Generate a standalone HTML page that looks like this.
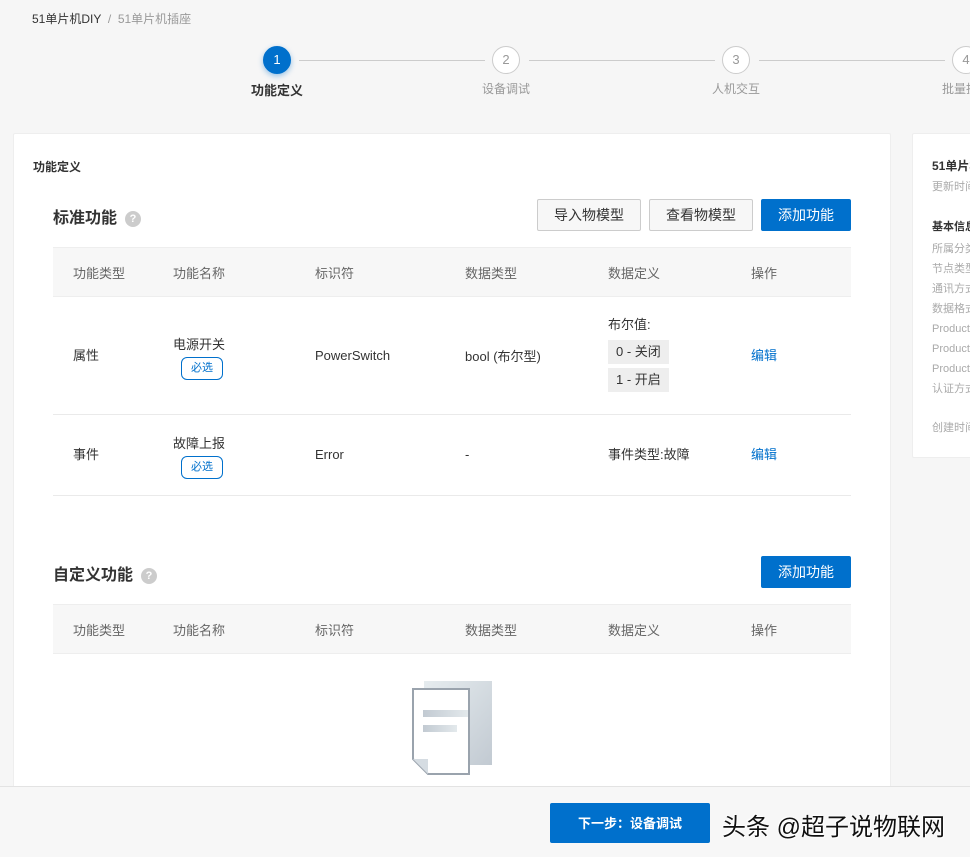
<!DOCTYPE html>
<html><head><meta charset="utf-8"><style>
*{margin:0;padding:0;box-sizing:border-box}
body{width:970px;height:857px;overflow:hidden;background:#f6f6f6;font-family:"Liberation Sans","Noto Sans CJK SC",sans-serif;color:#333;font-size:13px;position:relative}
.abs{position:absolute}
.crumb{left:32px;top:10px;font-size:12px;color:#333}
.crumb span{color:#999}
.circ{width:28px;height:28px;border-radius:50%;border:1px solid #ccc;background:#fff;color:#999;font-size:13px;text-align:center;line-height:26px;top:46px}
.circ.on{background:#0070cc;border-color:#0070cc;color:#fff;box-shadow:0 2px 6px rgba(0,112,204,.4)}
.line{height:1px;background:#ccc;top:60px}
.lab{top:80px;font-size:12px;color:#999;width:100px;text-align:center}
.card{background:#fff;border:1px solid #eee;border-radius:2px}
.btn{height:32px;border:1px solid #ccc;border-radius:2px;background:#f7f7f7;font-size:14px;line-height:30px;text-align:center;color:#333}
.btn.p{background:#0070cc;border-color:#0070cc;color:#fff}
.th{left:53px;width:798px;height:50px;background:#f7f7f7;border-top:1px solid #eee;border-bottom:1px solid #eee}
.t{position:absolute;font-size:13px;white-space:nowrap}
.gray{color:#666}
.hr{left:53px;width:798px;height:1px;background:#eaeaea}
.tag{position:absolute;border:1px solid #0070cc;border-radius:6px;color:#0070cc;font-size:11px;width:42px;height:23px;line-height:21px;text-align:center}
.chip{position:absolute;background:#eee;font-size:13px;padding:0 8px;height:24px;line-height:24px}
.q{display:inline-block;width:16px;height:16px;border-radius:50%;background:#ccc;color:#fff;font-size:11px;text-align:center;line-height:16px;vertical-align:middle;margin-left:8px}
.side{font-size:11px;color:#aaa;left:932px;white-space:nowrap;line-height:14px;height:14px}
</style></head><body>
<div class="abs crumb">51单片机DIY &nbsp;<span>/ &nbsp;51单片机插座</span></div>

<div class="abs line" style="left:299px;width:186px"></div>
<div class="abs line" style="left:529px;width:186px"></div>
<div class="abs line" style="left:759px;width:186px"></div>
<div class="abs circ on" style="left:263px">1</div>
<div class="abs circ" style="left:492px">2</div>
<div class="abs circ" style="left:722px">3</div>
<div class="abs circ" style="left:952px">4</div>
<div class="abs lab" style="left:227px;color:#333;font-weight:bold;font-size:13px">功能定义</div>
<div class="abs lab" style="left:456px">设备调试</div>
<div class="abs lab" style="left:686px">人机交互</div>
<div class="abs lab" style="left:942px;text-align:left;white-space:nowrap">批量投产</div>

<div class="abs card" style="left:13px;top:133px;width:878px;height:680px"></div>
<div class="abs card" style="left:912px;top:133px;width:80px;height:325px"></div>
<div class="abs" style="left:932px;top:157px;font-size:12px;font-weight:bold;white-space:nowrap">51单片机插座</div>
<div class="abs side" style="top:180px">更新时间</div>
<div class="abs" style="left:932px;top:218px;font-size:11px;font-weight:bold;white-space:nowrap">基本信息</div>
<div class="abs side" style="top:242px">所属分类</div>
<div class="abs side" style="top:262px">节点类型</div>
<div class="abs side" style="top:282px">通讯方式</div>
<div class="abs side" style="top:302px">数据格式</div>
<div class="abs side" style="top:322px">ProductKey</div>
<div class="abs side" style="top:342px">ProductId</div>
<div class="abs side" style="top:362px">ProductSecret</div>
<div class="abs side" style="top:382px">认证方式</div>
<div class="abs side" style="top:421px">创建时间</div>

<div class="abs" style="left:33px;top:158px;font-size:12px;font-weight:bold">功能定义</div>
<div class="abs" style="left:53px;top:204px;font-size:16px;font-weight:bold">标准功能<span class="q">?</span></div>
<div class="abs btn" style="left:537px;top:199px;width:104px">导入物模型</div>
<div class="abs btn" style="left:649px;top:199px;width:104px">查看物模型</div>
<div class="abs btn p" style="left:761px;top:199px;width:90px">添加功能</div>

<div class="abs th" style="top:247px"></div>
<div class="t gray" style="left:73px;top:263px">功能类型</div>
<div class="t gray" style="left:173px;top:263px">功能名称</div>
<div class="t gray" style="left:315px;top:263px">标识符</div>
<div class="t gray" style="left:465px;top:263px">数据类型</div>
<div class="t gray" style="left:608px;top:263px">数据定义</div>
<div class="t gray" style="left:751px;top:263px">操作</div>

<div class="t" style="left:73px;top:345px">属性</div>
<div class="t" style="left:173px;top:334px">电源开关</div>
<div class="tag" style="left:181px;top:357px">必选</div>
<div class="t" style="left:315px;top:348px">PowerSwitch</div>
<div class="t" style="left:465px;top:346px">bool (布尔型)</div>
<div class="t" style="left:608px;top:314px">布尔值:</div>
<div class="chip" style="left:608px;top:340px">0 - 关闭</div>
<div class="chip" style="left:608px;top:368px">1 - 开启</div>
<div class="t" style="left:751px;top:345px;color:#0070cc">编辑</div>
<div class="abs hr" style="top:414px"></div>

<div class="t" style="left:73px;top:444px">事件</div>
<div class="t" style="left:173px;top:433px">故障上报</div>
<div class="tag" style="left:181px;top:456px">必选</div>
<div class="t" style="left:315px;top:447px">Error</div>
<div class="t" style="left:465px;top:447px">-</div>
<div class="t" style="left:608px;top:444px">事件类型:故障</div>
<div class="t" style="left:751px;top:444px;color:#0070cc">编辑</div>
<div class="abs hr" style="top:495px"></div>

<div class="abs" style="left:53px;top:561px;font-size:16px;font-weight:bold">自定义功能<span class="q">?</span></div>
<div class="abs btn p" style="left:761px;top:556px;width:90px">添加功能</div>
<div class="abs th" style="top:604px"></div>
<div class="t gray" style="left:73px;top:620px">功能类型</div>
<div class="t gray" style="left:173px;top:620px">功能名称</div>
<div class="t gray" style="left:315px;top:620px">标识符</div>
<div class="t gray" style="left:465px;top:620px">数据类型</div>
<div class="t gray" style="left:608px;top:620px">数据定义</div>
<div class="t gray" style="left:751px;top:620px">操作</div>

<svg class="abs" style="left:405px;top:678px" width="95" height="100">
<defs><linearGradient id="g" x1="0" y1="0" x2="1" y2="1"><stop offset="0" stop-color="#e6ecef"/><stop offset="1" stop-color="#c2cad2"/></linearGradient>
<linearGradient id="h" x1="0" y1="0" x2="1" y2="0"><stop offset="0" stop-color="#c2cad2"/><stop offset="1" stop-color="#e3e9ec"/></linearGradient></defs>
<rect x="19" y="3" width="68" height="84" fill="url(#g)"/>
<path d="M8 11 H64 V96 H23 L8 81 Z" fill="#fff" stroke="#9aa3ad" stroke-width="2"/>
<path d="M8 81 L23 81 L23 96 Z" fill="#d5dce2"/>
<rect x="18" y="32" width="45" height="7" fill="url(#h)"/>
<rect x="18" y="47" width="34" height="7" fill="url(#h)"/>
</svg>

<div class="abs" style="left:0;top:786px;width:970px;height:71px;background:#f7f7f7;border-top:1px solid #e3e3e3"></div>
<div class="abs btn p" style="left:550px;top:803px;width:160px;height:40px;line-height:40px;font-size:13px;font-weight:bold">下一步：设备调试</div>
<div class="abs" style="left:722px;top:807px;font-size:24px;color:#111;text-shadow:1px 1px 1px #fff,-1px -1px 1px #fff;white-space:nowrap">头条 @超子说物联网</div>
</body></html>
